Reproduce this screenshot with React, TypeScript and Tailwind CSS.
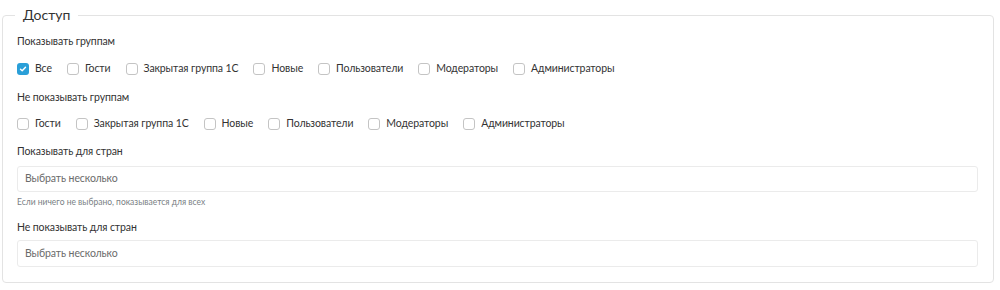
import React from "react";

const groupsShow = ["Все", "Гости", "Закрытая группа 1С", "Новые", "Пользователи", "Модераторы", "Администраторы"];
const groupsHide = ["Гости", "Закрытая группа 1С", "Новые", "Пользователи", "Модераторы", "Администраторы"];

function Check({ checked }: { checked?: boolean }) {
  return checked ? (
    <span className="flex h-[12px] w-[12px] shrink-0 items-center justify-center rounded-[3px] bg-[#2a9fd8]">
      <svg width="8" height="8" viewBox="0 0 8 8">
        <path d="M1.5 4.2 L3.2 5.8 L6.5 2.3" fill="none" stroke="white" strokeWidth="1.4" strokeLinecap="round" strokeLinejoin="round" />
      </svg>
    </span>
  ) : (
    <span className="block h-[12px] w-[12px] shrink-0 rounded-[3px] border border-[#c4c4c4] bg-white" />
  );
}

function Row({ items, first }: { items: string[]; first?: boolean }) {
  return (
    <div className="flex h-[18px] items-center gap-[15px]">
      {items.map((t, i) => (
        <label key={t} className="flex items-center gap-[6px] text-[10.5px] tracking-[-0.1px] text-[#333]">
          <Check checked={first && i === 0} />
          <span>{t}</span>
        </label>
      ))}
    </div>
  );
}

export default function App() {
  return (
    <div className="h-[290px] w-[1000px] bg-white" style={{ fontFamily: 'Lato, "Noto Sans", sans-serif' }}>
      <fieldset className="ml-[2px] mt-[6px] h-[277px] w-[992px] rounded-[4px] border border-[#e3e3e3] px-[14px] pb-0 pt-0">
        <legend className="-ml-[2px] px-[8px] text-[14px] leading-[18px] text-[#333]">Доступ</legend>
        <div className="mt-[9px] text-[10.5px] leading-[16px] tracking-[-0.1px] text-[#333]">Показывать группам</div>
        <div className="mt-[11px]"><Row items={groupsShow} first /></div>
        <div className="mt-[11px] text-[10.5px] leading-[16px] tracking-[-0.1px] text-[#333]">Не показывать группам</div>
        <div className="mt-[10px]"><Row items={groupsHide} /></div>
        <div className="mt-[10px] text-[10.5px] leading-[16px] tracking-[-0.1px] text-[#333]">Показывать для стран</div>
        <div className="mt-[7px] flex h-[26px] w-[961px] items-center rounded-[3px] border border-[#ebebeb] px-[7px] text-[10.5px] tracking-[-0.1px] text-[#6b6b6b]">Выбрать несколько</div>
        <div className="mt-[4px] text-[8.5px] leading-[12px] text-[#7a7f85]">Если ничего не выбрано, показывается для всех</div>
        <div className="mt-[11px] text-[10.5px] leading-[16px] tracking-[-0.1px] text-[#333]">Не показывать для стран</div>
        <div className="mt-[5px] flex h-[27px] w-[961px] items-center rounded-[3px] border border-[#ebebeb] px-[7px] text-[10.5px] tracking-[-0.1px] text-[#6b6b6b]">Выбрать несколько</div>
      </fieldset>
    </div>
  );
}
